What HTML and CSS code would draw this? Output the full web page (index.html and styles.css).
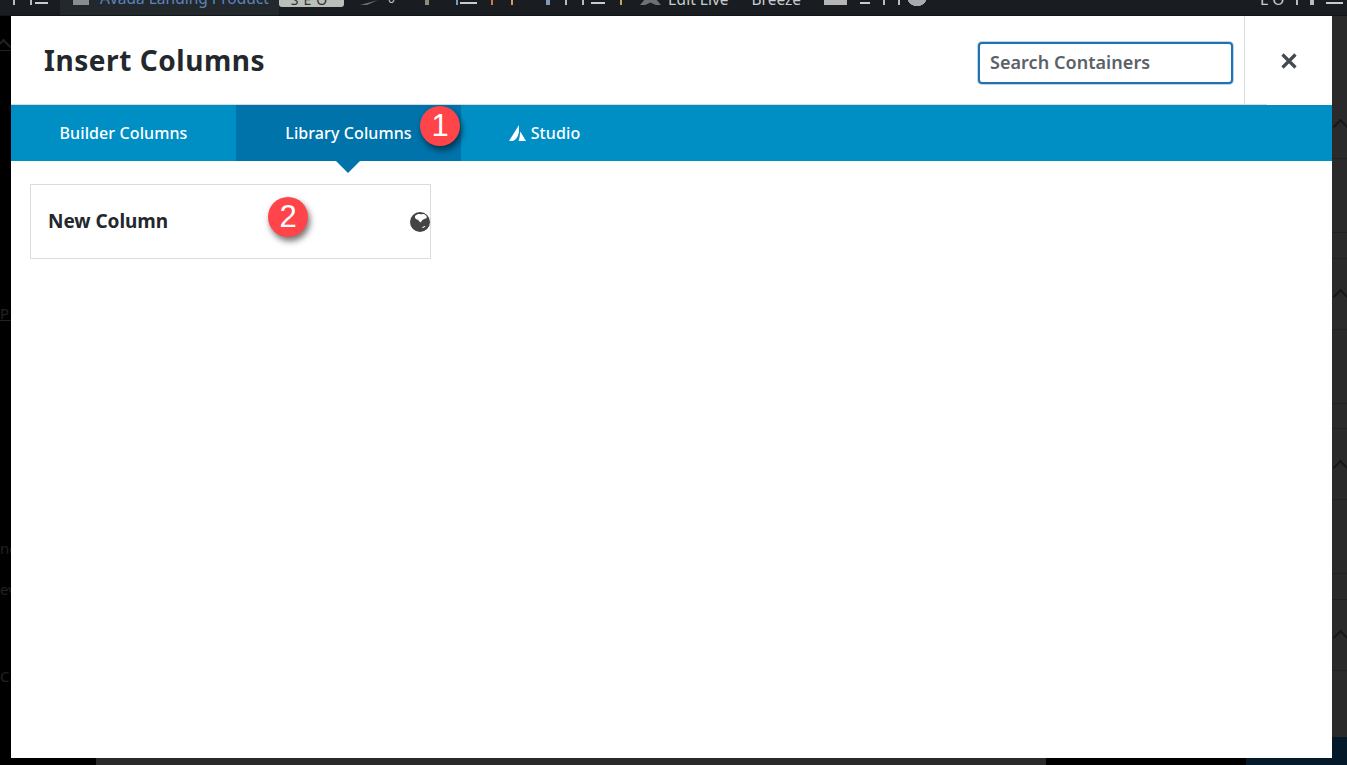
FILE: index.html
```html
<!DOCTYPE html>
<html lang="en">
<head>
    <meta charset="UTF-8">
    <meta name="viewport" content="width=device-width, initial-scale=1.0">
    <title>Insert Columns</title>
    <link rel="stylesheet" href="styles.css">
</head>
<body>
    <div class="admin-bar">
        <div class="bar-group bar-menu">
            <span class="tick"></span><span class="tick"></span><span class="dash"></span>
        </div>
        <div class="bar-page">
            <span class="lock"></span>
            <span class="page-name">Avada Landing Product</span>
        </div>
        <span class="seo-badge">SEO</span>
        <div class="bar-group bar-comments">
            <span class="tool-comment"></span><span class="tool-text">0</span>
            <span class="tick tall"></span>
        </div>
        <div class="bar-group bar-cols">
            <span class="tick col"></span><span class="dash"></span><span class="tick orange"></span><span class="tick tan"></span>
        </div>
        <div class="bar-group bar-rows">
            <span class="tick col wide"></span><span class="tick"></span><span class="tick"></span><span class="dash"></span><span class="tick tan"></span>
        </div>
        <div class="bar-group bar-live">
            <span class="tool-logo"></span>
            <span class="tool-text">Edit Live</span>
            <span class="tool-text breeze">Breeze</span>
        </div>
        <div class="bar-group bar-end">
            <span class="tool-card"></span><span class="dash short"></span><span class="tick"></span><span class="tick"></span>
            <span class="tool-round"></span>
        </div>
        <div class="bar-group bar-right">
            <span class="tool-text">L O</span><span class="tick"></span><span class="tick wide"></span><span class="dash"></span>
        </div>
    </div>

    <div class="backdrop">
        <div class="side-left">
            <div class="left-rule"><span class="chevron dim"></span></div>
            <span class="ghost ghost-menu">P|</span>
            <span class="ghost ghost-ne">ne</span>
            <span class="ghost ghost-ev">ev</span>
            <span class="ghost ghost-c">C</span>
        </div>
        <div class="side-right">
            <div class="fold">
                <div class="fold-row"><span class="chevron"></span></div>
                <div class="fold-row mid"></div>
                <div class="fold-row thin"></div>
            </div>
            <div class="fold">
                <div class="fold-row"><span class="chevron"></span></div>
                <div class="fold-row mid"></div>
                <div class="fold-row thin"></div>
            </div>
            <div class="fold">
                <div class="fold-row"><span class="chevron"></span></div>
                <div class="fold-row mid"></div>
                <div class="fold-row thin"></div>
            </div>
            <div class="fold">
                <div class="fold-row"><span class="chevron"></span></div>
                <div class="fold-row mid"></div>
            </div>
        </div>
        <div class="footer-strip">
            <div class="strip-black"></div>
            <div class="strip-gray"></div>
            <div class="strip-black wide"></div>
            <div class="strip-navy"></div>
        </div>
    </div>

    <div class="modal">
        <div class="modal-head">
            <h2 class="modal-title">Insert Columns</h2>
            <input class="search" type="text" placeholder="Search Containers">
            <button class="close-btn" aria-label="Close">
                <svg width="16" height="16" viewBox="0 0 16 16"><path d="M1.500 1.500l13 13M14.500 1.500l-13 13" stroke="#434b52" stroke-width="3.200" fill="none"/></svg>
            </button>
        </div>
        <div class="tabs">
            <a class="tab">Builder Columns</a>
            <a class="tab active">Library Columns</a>
            <a class="tab studio">
                <svg width="17" height="16" viewBox="0 0 17 16"><path d="M10 0L0 16h3.500C7 15 9 12 10 7zM11.300 6.500L17 16H9.500c1-2 1.400-6 1.800-9.500z" fill="#fff"/></svg>
                Studio
            </a>
        </div>
        <div class="modal-body">
            <div class="card">
                <span class="card-title">New Column</span>
                <svg class="globe" width="20" height="20" viewBox="0 0 20 20"><circle cx="10" cy="10" r="10" fill="#434343"/><path d="M5 4c2-2 5-2.500 6-1.500 1-.8 3-.8 5 1 1 1 1 2.500 0 3-1.500.5-3 .5-4 2-.5 1-1.500 2-2 2-.5-1.500-1.500-2.500-3-3-1.500-.5-2.500-2-2-3.500zM12 15.500c1-1 2.500-1.500 3.500-1.500-.5 1-2.500 2.500-3.500 1.500z" fill="#fff"/></svg>
            </div>
        </div>
    </div>

    <span class="marker marker-one">1</span>
    <span class="marker marker-two">2</span>
</body>
</html>
```

FILE: styles.css
```css
* {
    box-sizing: border-box;
}
html, body {
    height: 100%;
}
body {
    margin: 0;
    font-family: "Noto Sans", sans-serif;
    background-color: #000;
    overflow: hidden;
    display: flex;
    flex-direction: column;
}

/* admin bar behind the modal, only its lower edge shows */
.admin-bar {
    height: 16px;
    flex: none;
    display: flex;
    align-items: flex-start;
    background-color: #191d21;
    border-bottom: 1px solid #131619;
    overflow: hidden;
    color: #c9ccce;
    font-size: 15.500px;
}
.bar-group {
    display: flex;
    align-items: flex-end;
    height: 5px;
    flex: none;
}
.bar-menu {
    width: 60px;
    padding-left: 13px;
    gap: 15px;
}
.bar-menu .dash {
    width: 13px;
    margin-left: -12px;
}
.bar-page {
    width: 219px;
    height: 16px;
    flex: none;
    background-color: #23282d;
    display: flex;
    align-items: flex-start;
    padding-left: 13px;
}
.lock {
    width: 16px;
    height: 5px;
    background-color: #8a8d90;
}
.page-name {
    color: #5b85bd;
    margin-left: 11px;
    line-height: 14px;
    margin-top: -9px;
    white-space: nowrap;
}
.seo-badge {
    width: 65px;
    height: 7px;
    flex: none;
    background-color: #b8c0b8;
    border-radius: 0 0 3px 3px;
    color: #333;
    font-size: 14px;
    line-height: 0;
    text-align: center;
    letter-spacing: 5px;
    overflow: hidden;
}
.bar-comments {
    margin-left: 16px;
    width: 92px;
}
.bar-comments .tool-text {
    margin-left: 10px;
    font-size: 12px;
}
.bar-comments .tick {
    margin-left: 30px;
}
.bar-cols {
    width: 94px;
    padding-left: 4px;
    gap: 14px;
}
.bar-cols .dash {
    margin-left: -12px;
}
.bar-cols .tan {
    margin-left: 4px;
}
.bar-rows {
    width: 94px;
    gap: 15px;
}
.bar-rows .dash {
    width: 14px;
    margin-left: -8px;
}
.bar-live {
    width: 184px;
}
.bar-live .tool-text {
    margin-left: 7px;
}
.bar-live .breeze {
    margin-left: 23px;
}
.bar-end {
    gap: 13px;
    width: 436px;
}
.bar-end .tool-round {
    margin-left: -6px;
}
.bar-right {
    gap: 12px;
}
.tick {
    width: 2px;
    height: 5px;
    background-color: #b9bcbe;
}
.tick.wide {
    width: 4px;
}
.tick.tan {
    background-color: #c9a25f;
}
.tick.orange {
    background-color: #c97a4a;
}
.tick.col {
    background-color: #7d9bb8;
}
.tick.tall {
    width: 4px;
    height: 5px;
    background-color: #8f8a78;
}
.dash {
    width: 17px;
    height: 2px;
    margin-bottom: 1px;
    background-color: #c9ccce;
}
.dash.short {
    width: 10px;
}
.tool-text {
    line-height: 14px;
    margin-bottom: -1px;
    white-space: nowrap;
}
.tool-comment {
    width: 18px;
    height: 5px;
    background-color: #6b6e71;
    clip-path: polygon(0 100%, 100% 0, 40% 100%);
}
.tool-logo {
    width: 21px;
    height: 5px;
    background-color: #6d7175;
    clip-path: polygon(20% 0, 80% 0, 100% 100%, 75% 100%, 50% 50%, 25% 100%, 0 100%);
}
.tool-card {
    width: 23px;
    height: 5px;
    background-color: #b5b5b5;
}
.tool-round {
    width: 20px;
    height: 6px;
    margin-bottom: -1px;
    background: radial-gradient(circle at 50% -4px, #a8abad 10px, transparent 10.500px);
}

/* page left over around the modal */
.backdrop {
    flex: 1;
    display: grid;
    grid-template-columns: 1332px 15px;
    grid-template-rows: 721px 28px;
    min-height: 0;
}
.side-left {
    grid-column: 1;
    grid-row: 1;
    display: flex;
    flex-direction: column;
    align-items: flex-start;
    color: #222;
    font-size: 15px;
    white-space: nowrap;
}
.left-rule {
    width: 11px;
    height: 35px;
    border-bottom: 1px solid #222;
    overflow: hidden;
    padding-top: 25px;
}
.ghost {
    line-height: 19px;
}
.ghost-menu {
    margin-top: 253px;
    text-decoration: underline;
}
.ghost-ne {
    margin-top: 216px;
}
.ghost-ev {
    margin-top: 22px;
}
.ghost-c {
    margin-top: 68px;
}
.side-right {
    grid-column: 2;
    grid-row: 1;
    background-color: #2a2a2a;
    padding-top: 72px;
    overflow: hidden;
}
.fold {
    height: 170.500px;
}
.fold-row {
    height: 71px;
    display: flex;
    justify-content: center;
    align-items: center;
    border-bottom: 1px solid #222;
}
.fold-row.mid {
    height: 74px;
}
.fold-row.thin {
    height: 25.500px;
}
.chevron {
    width: 11px;
    height: 11px;
    margin-left: 2px;
    margin-top: 6px;
    border-top: 2px solid #171717;
    border-left: 2px solid #171717;
    transform: rotate(45deg);
}
.chevron.dim {
    display: block;
    margin: 0 0 0 -2px;
    border-color: #222;
}
.footer-strip {
    grid-column: 1 / 3;
    grid-row: 2;
    display: flex;
}
.strip-black {
    width: 96px;
    background-color: #000;
}
.strip-gray {
    width: 950px;
    background-color: #2a2a2a;
}
.strip-black.wide {
    width: 200px;
}
.strip-navy {
    flex: 1;
    background-color: #04192a;
}

/* modal */
.modal {
    position: absolute;
    top: 16px;
    left: 11px;
    width: 1321px;
    height: 742px;
    background-color: #fff;
    display: flex;
    flex-direction: column;
}
.modal-head {
    height: 89px;
    flex: none;
    display: flex;
    align-items: center;
    padding-left: 33px;
    border-style: solid;
    border-width: 0 0 1px;
    border-image: linear-gradient(90deg, #d9d9d9 1255px, #fff 1255px) 1;
}
.modal-title {
    margin: 0;
    font-size: 28px;
    font-weight: 700;
    color: #23282d;
    letter-spacing: 0.550px;
}
.search {
    margin-left: auto;
    margin-top: 5px;
    width: 255px;
    height: 42px;
    padding: 0 10px 2px;
    border: 2px solid #2271b1;
    border-radius: 4px;
    box-shadow: 0 0 0 1px #bcd6ea;
    font-family: inherit;
    font-size: 18px;
    font-weight: 600;
    letter-spacing: 0.050px;
    color: #5b6168;
    outline: none;
}
.search::placeholder {
    color: #5b6168;
    opacity: 1;
}
.close-btn {
    width: 88px;
    height: 88px;
    margin-left: 11px;
    border: none;
    border-left: 1px solid #d9d9d9;
    background: none;
    padding: 2px 0 0;
    display: flex;
    align-items: center;
    justify-content: center;
}
.tabs {
    height: 56px;
    flex: none;
    display: flex;
    background-color: #008fc5;
}
.tab {
    width: 225px;
    display: flex;
    align-items: center;
    justify-content: center;
    gap: 5px;
    color: #fff;
    font-size: 16px;
    font-weight: 500;
    letter-spacing: 0.100px;
}
.tab.active {
    background-color: #0073aa;
    position: relative;
}
.tab.active::after {
    content: "";
    position: absolute;
    left: 100px;
    top: 100%;
    border-left: 12px solid transparent;
    border-right: 12px solid transparent;
    border-top: 12px solid #0073aa;
}
.tab.studio {
    width: 167px;
}
.modal-body {
    padding: 23px 19px;
    flex: 1;
}
.card {
    width: 401px;
    height: 75px;
    border: 1px solid #dcdcdc;
    display: flex;
    align-items: center;
    justify-content: space-between;
    padding-left: 17px;
}
.card-title {
    font-size: 19px;
    font-weight: 700;
    letter-spacing: -0.050px;
    color: #23282d;
    margin-bottom: 2px;
}
.globe {
    flex: none;
    margin-top: 1px;
}

/* numbered callouts on top of the screenshot */
.marker {
    position: absolute;
    width: 40px;
    height: 40px;
    border-radius: 50%;
    background-color: #ff444a;
    color: #fff;
    font-family: "Liberation Sans", sans-serif;
    font-size: 31px;
    line-height: 40px;
    text-align: center;
    box-shadow: 2px 4px 6px rgba(0, 0, 0, 0.55);
}
.marker-one {
    left: 420px;
    top: 106px;
}
.marker-two {
    left: 268px;
    top: 197px;
}
```
